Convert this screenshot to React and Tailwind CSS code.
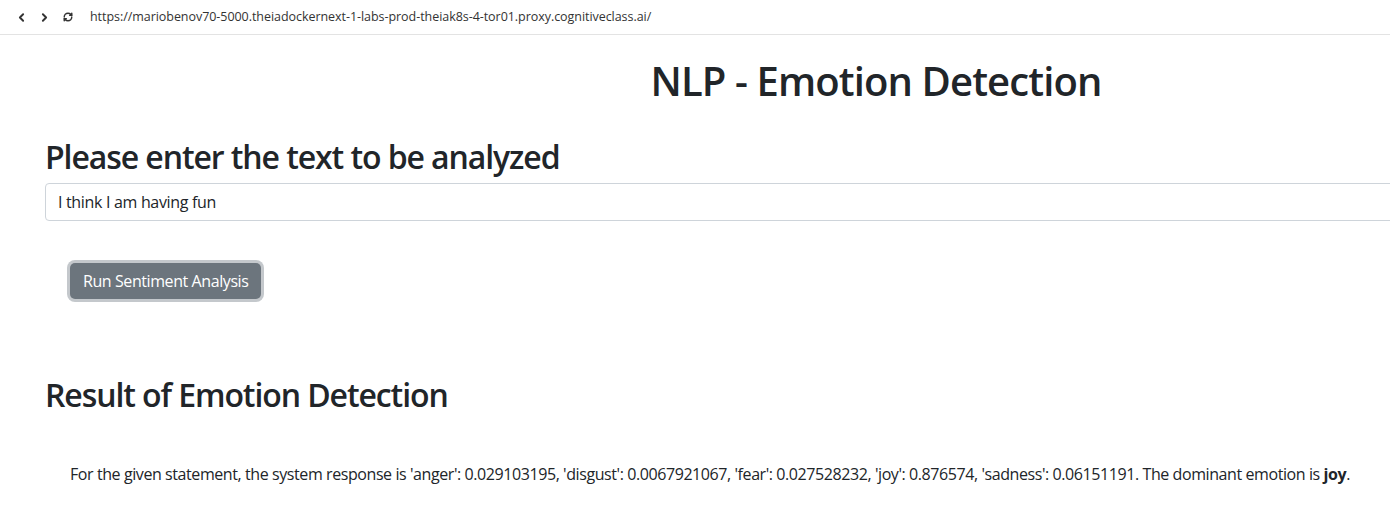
import { ChevronLeft, ChevronRight, RefreshCw } from 'lucide-react'

const FONT = { fontFamily: '"Open Sans", "Noto Sans", sans-serif' }

export default function App() {
  return (
    <div className="min-h-screen overflow-hidden bg-white tracking-[-0.026em] text-[#212529]" style={FONT}>
      {/* Barre du navigateur */}
      <div className="flex h-[35px] items-center gap-[10px] border-b border-[#e3e3e3] pl-[15px] tracking-normal text-[#333]">
        <ChevronLeft size={13} strokeWidth={3.5} />
        <ChevronRight size={13} strokeWidth={3.5} />
        <RefreshCw size={10} strokeWidth={3.5} className="ml-[2px]" />
        <span className="ml-[7px] text-[12.5px] tracking-[-0.05px] text-[#333]">
          https://mariobenov70-5000.theiadockernext-1-labs-prod-theiak8s-4-tor01.proxy.cognitiveclass.ai/
        </span>
      </div>

      {/* Contenu */}
      <div className="w-[1752px] px-[45px]">
        <h1 className="mt-[22px] text-center text-[40px] font-semibold leading-[48px] tracking-[-0.022em]">
          NLP - Emotion Detection
        </h1>

        <h2 className="mt-[33px] text-[32px] font-semibold leading-[38px] tracking-[-0.034em]">
          Please enter the text to be analyzed
        </h2>
        <input
          type="text"
          defaultValue="I think I am having fun"
          className="mt-[7px] block h-[38px] w-full rounded-[4px] border border-[#ced4da] px-[12px] text-[16px] tracking-[-0.02em] text-[#212529] outline-none"
          style={FONT}
        />

        <div className="pl-[25px] pt-[42px]">
          <button className="h-[36px] rounded-[5px] bg-[#6c757d] px-[13px] text-[16px] text-white ring-[3px] ring-[#c4c8cc]">
            Run Sentiment Analysis
          </button>
        </div>

        <h2 className="mt-[77px] text-[32px] font-semibold leading-[38px] tracking-[-0.034em]">
          Result of Emotion Detection
        </h2>

        <p className="mt-[48px] whitespace-nowrap pl-[25px] text-[16px] leading-[24px]">
          For the given statement, the system response is 'anger': 0.029103195, 'disgust': 0.0067921067,
          'fear': 0.027528232, 'joy': 0.876574, 'sadness': 0.06151191. The dominant emotion is <b>joy</b>.
        </p>
      </div>
    </div>
  )
}
